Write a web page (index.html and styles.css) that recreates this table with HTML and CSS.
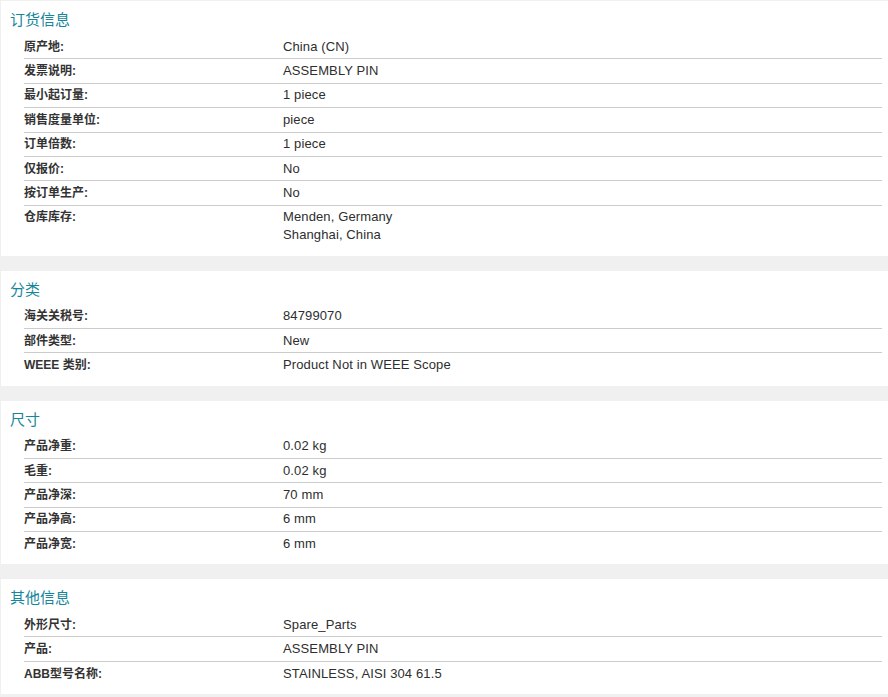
FILE: index.html
```html
<!DOCTYPE html>
<html lang="zh">
<head>
<meta charset="utf-8">
<title>产品信息</title>
<link rel="stylesheet" href="styles.css">
</head>
<body>
<div class="page">
  <section class="card">
    <h2 class="card-title">订货信息</h2>
    <div class="rows">
      <div class="row"><div class="label">原产地:</div><div class="value">China (CN)</div></div>
      <div class="row"><div class="label">发票说明:</div><div class="value">ASSEMBLY PIN</div></div>
      <div class="row"><div class="label">最小起订量:</div><div class="value">1 piece</div></div>
      <div class="row"><div class="label">销售度量单位:</div><div class="value">piece</div></div>
      <div class="row"><div class="label">订单倍数:</div><div class="value">1 piece</div></div>
      <div class="row"><div class="label">仅报价:</div><div class="value">No</div></div>
      <div class="row"><div class="label">按订单生产:</div><div class="value">No</div></div>
      <div class="row"><div class="label">仓库库存:</div><div class="value">Menden, Germany<br>Shanghai, China</div></div>
    </div>
  </section>
  <section class="card">
    <h2 class="card-title">分类</h2>
    <div class="rows">
      <div class="row"><div class="label">海关关税号:</div><div class="value">84799070</div></div>
      <div class="row"><div class="label">部件类型:</div><div class="value">New</div></div>
      <div class="row"><div class="label">WEEE 类别:</div><div class="value">Product Not in WEEE Scope</div></div>
    </div>
  </section>
  <section class="card">
    <h2 class="card-title">尺寸</h2>
    <div class="rows">
      <div class="row"><div class="label">产品净重:</div><div class="value">0.02 kg</div></div>
      <div class="row"><div class="label">毛重:</div><div class="value">0.02 kg</div></div>
      <div class="row"><div class="label">产品净深:</div><div class="value">70 mm</div></div>
      <div class="row"><div class="label">产品净高:</div><div class="value">6 mm</div></div>
      <div class="row"><div class="label">产品净宽:</div><div class="value">6 mm</div></div>
    </div>
  </section>
  <section class="card">
    <h2 class="card-title">其他信息</h2>
    <div class="rows">
      <div class="row"><div class="label">外形尺寸:</div><div class="value">Spare_Parts</div></div>
      <div class="row"><div class="label">产品:</div><div class="value">ASSEMBLY PIN</div></div>
      <div class="row"><div class="label">ABB型号名称:</div><div class="value">STAINLESS, AISI 304 61.5</div></div>
    </div>
  </section>
</div>
</body>
</html>
```
FILE: styles.css
```css
html, body {
  margin: 0;
  padding: 0;
  background: #f0f0f0;
}
body {
  font-family: "Liberation Sans", Arial, "Noto Sans CJK SC", sans-serif;
  color: #333333;
}
.page {
  padding: 1px 0 0 1px;
  display: flex;
  flex-direction: column;
  gap: 14.7px;
}
.card {
  background: #ffffff;
  padding: 0 6px 9px 0;
}
.card-title {
  margin: 0;
  padding: 8px 9px 6px;
  font-size: 15px;
  line-height: 20px;
  font-weight: normal;
  color: #15869b;
  font-family: "Noto Sans CJK SC", "Liberation Sans", sans-serif;
}
.rows {
  margin-left: 23px;
}
.row {
  display: grid;
  grid-template-columns: 259px 1fr;
  padding: 2.7px 0;
  line-height: 18px;
  border-bottom: 1px solid #cccccc;
}
.row:last-child {
  border-bottom: none;
}
.label {
  font-size: 12px;
  font-weight: bold;
  color: #333333;
  font-family: "Liberation Sans", Arial, "Noto Sans CJK SC", sans-serif;
}
.value {
  font-size: 13px;
  letter-spacing: 0.12px;
  color: #2e2e2e;
}
```
